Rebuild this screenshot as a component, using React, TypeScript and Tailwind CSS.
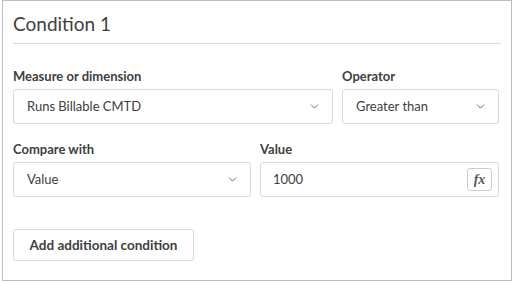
import { ChevronDown } from "lucide-react"

const font = { fontFamily: "Lato, 'Noto Sans', sans-serif" }

function Label({ children }: { children: React.ReactNode }) {
  return (
    <div className="h-[18px] text-[13px] font-bold leading-[18px] text-[#404040]">
      {children}
    </div>
  )
}

function SelectBox({ value }: { value: string }) {
  return (
    <div className="flex h-[35px] items-center justify-between rounded-[3px] border border-[#d9d9d9] bg-white pl-[13px] pr-[11px] text-[13px] text-[#404040]">
      <span>{value}</span>
      <ChevronDown size={13} strokeWidth={1.6} className="text-[#595959]" />
    </div>
  )
}

export default function App() {
  return (
    <div className="bg-white" style={font}>
      <div className="ml-[2px] h-[281px] w-[510px] border border-[#bdbdbd] bg-white px-[10px]">
        {/* HEADER */}
        <div className="border-b border-[#d9d9d9] pb-[9px] pt-[12px]">
          <h2 className="text-[19px] leading-[21px] text-[#404040]">Condition 1</h2>
        </div>

        {/* ROW 1 */}
        <div className="mt-[23px] flex gap-[9px]">
          <div className="flex w-[320px] flex-col gap-[4px]">
            <Label>Measure or dimension</Label>
            <SelectBox value="Runs Billable CMTD" />
          </div>
          <div className="flex w-[157px] flex-col gap-[4px]">
            <Label>Operator</Label>
            <SelectBox value="Greater than" />
          </div>
        </div>

        {/* ROW 2 */}
        <div className="mt-[16px] flex gap-[9px]">
          <div className="flex w-[238px] flex-col gap-[4px]">
            <Label>Compare with</Label>
            <SelectBox value="Value" />
          </div>
          <div className="flex w-[239px] flex-col gap-[4px]">
            <Label>Value</Label>
            <div className="flex h-[35px] items-center justify-between rounded-[3px] border border-[#d9d9d9] bg-white pl-[12px] pr-[6px] text-[13px] text-[#404040]">
              <span>1000</span>
              <span
                className="flex h-[23px] w-[25px] items-center justify-center rounded-[3px] border border-[#cccccc] text-[14px] font-bold italic text-[#595959]"
                style={{ fontFamily: "'Liberation Serif', serif" }}
              >
                fx
              </span>
            </div>
          </div>
        </div>

        {/* FOOTER */}
        <button className="mt-[32px] h-[32px] w-[181px] rounded-[3px] border border-[#d9d9d9] bg-white text-[13.5px] font-bold text-[#404040]">
          Add additional condition
        </button>
      </div>
    </div>
  )
}
